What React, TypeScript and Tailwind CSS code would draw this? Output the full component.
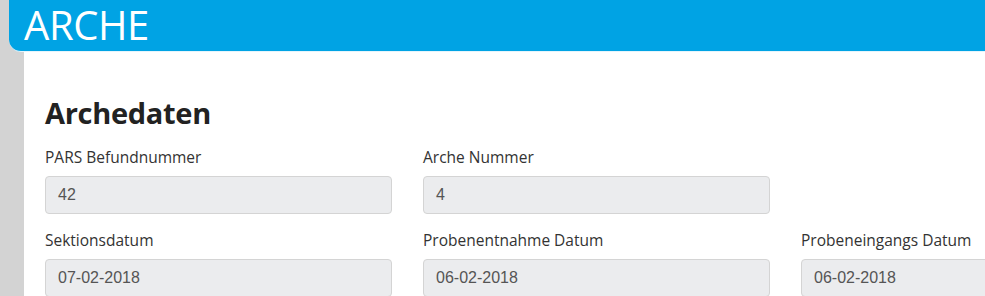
import React from "react";

const fields = [
  { label: "PARS Befundnummer", value: "42" },
  { label: "Arche Nummer", value: "4" },
  null,
  { label: "Sektionsdatum", value: "07-02-2018" },
  { label: "Probenentnahme Datum", value: "06-02-2018" },
  { label: "Probeneingangs Datum", value: "06-02-2018" },
];

const Field = ({ label, value }: { label: string; value: string }) => (
  <div className="flex flex-col">
    <label className="h-[20px] text-[15.5px] leading-[20px] text-[#333] font-['Open_Sans',sans-serif]">
      {label}
    </label>
    <div className="mt-[9px] h-[38px] rounded-[4px] border border-[#d4d4d4] bg-[#ebecee] px-[12px] flex items-center text-[16px] text-[#555] font-['Liberation_Sans',Arial,sans-serif]">
      {value}
    </div>
  </div>
);

export default function App() {
  return (
    <div className="w-[985px] h-[296px] overflow-hidden bg-[#d3d3d3] flex flex-col">
      <header className="ml-[9px] h-[52px] shrink-0 rounded-bl-[12px] bg-[#00a3e4] border-b border-[#e6f5fc] pt-[1px]">
        <h1 className="pl-[15px] text-[40px] leading-[48px] font-normal text-white font-['Open_Sans',sans-serif] tracking-[-0.4px]">
          ARCHE
        </h1>
      </header>
      <main className="ml-[24px] flex-1 bg-white pl-[21px] pt-[41px]">
        <h2 className="text-[29px] leading-[40px] font-bold text-[#222] font-['Open_Sans',sans-serif] tracking-[-0.3px]">
          Archedaten
        </h2>
        <div className="mt-[14px] grid grid-cols-[347px_347px_347px] gap-x-[31px] gap-y-[16px]">
          {fields.map((f, i) =>
            f ? <Field key={i} label={f.label} value={f.value} /> : <div key={i} />
          )}
        </div>
      </main>
    </div>
  );
}
